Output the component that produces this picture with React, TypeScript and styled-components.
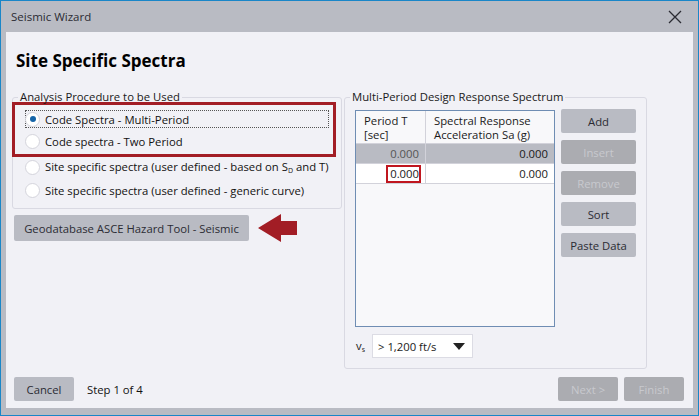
import React from "react";
import styled, { createGlobalStyle } from "styled-components";

const GlobalStyle = createGlobalStyle`
  html, body { margin: 0; padding: 0; background: #ffffff; }
  body { font-family: "Open Sans", "Noto Sans", sans-serif; }
`;

const Window = styled.div`
  width: 699px;
  height: 416px;
  box-sizing: border-box;
  border: 1px solid #1a86c8;
  background: #b9bbc3;
  display: flex;
  flex-direction: column;
  padding: 0 5px 7px 5px;
`;

const TitleBar = styled.div`
  height: 31px;
  flex-shrink: 0;
  display: flex;
  align-items: center;
  justify-content: space-between;
  padding: 0 11px 0 5px;
  font-size: 11.5px;
  color: #2b2b33;
`;

const Content = styled.div`
  flex: 1;
  background: #f1f1f6;
  display: flex;
  flex-direction: column;
  padding: 17px 9px 7px 8px;
`;

const Heading = styled.h1`
  margin: 0 0 0 2px;
  font-size: 17px;
  font-weight: 700;
  color: #000;
  line-height: 24px;
`;

const Columns = styled.div`
  display: flex;
  gap: 2px;
  margin-top: 18px;
  flex: 1;
  align-items: flex-start;
`;

const LeftCol = styled.div`
  display: flex;
  flex-direction: column;
`;

const GroupBox = styled.fieldset<{ $w: number; $h: number }>`
  margin: 0;
  width: ${(p) => p.$w}px;
  height: ${(p) => p.$h}px;
  box-sizing: border-box;
  border: 1px solid #d9d9e2;
  border-radius: 3px;
  padding: 0;
  min-width: 0;
`;

const LeftBox = styled(GroupBox)`
  margin-left: -2px;
`;

const Legend = styled.legend`
  font-size: 11.3px;
  color: #1a1a1a;
  padding: 0 2px;
  margin-left: 5px;
  line-height: 12px;
`;

const Highlight = styled.div`
  width: 324px;
  box-sizing: border-box;
  border: 3px solid #a21d25;
  margin: -1px 0 0 -1px;
  padding: 5px 0 4px 0;
  display: flex;
  flex-direction: column;
  gap: 4px;
`;

const RadioRow = styled.div<{ $focus?: boolean }>`
  display: flex;
  align-items: center;
  gap: 5px;
  height: 18px;
  box-sizing: border-box;
  width: 304px;
  margin-left: 10px;
  font-size: 11.3px;
  color: #111;
  border: 1px dotted ${(p) => (p.$focus ? "#555" : "transparent")};
  white-space: nowrap;
`;

const PlainRows = styled.div`
  display: flex;
  flex-direction: column;
  gap: 5px;
  padding: 1px 0 0 2px;
`;

const Radio = styled.span<{ $on?: boolean }>`
  width: 13px;
  height: 13px;
  margin-left: -1px;
  border-radius: 50%;
  background: #ffffff;
  border: 1px solid #d4d4dc;
  display: flex;
  align-items: center;
  justify-content: center;
  flex-shrink: 0;
  &::after {
    content: "";
    display: ${(p) => (p.$on ? "block" : "none")};
    width: 6px;
    height: 6px;
    border-radius: 50%;
    background: #1464a8;
  }
`;

const ToolRow = styled.div`
  display: flex;
  align-items: center;
  gap: 9px;
  margin-top: 4px;
`;

const Button = styled.button<{ $w: number; $h?: number; $disabled?: boolean }>`
  width: ${(p) => p.$w}px;
  height: ${(p) => p.$h ?? 24}px;
  flex-shrink: 0;
  border: none;
  border-radius: 2px;
  background: ${(p) => (p.$disabled ? "#abacb1" : "#b9bbc3")};
  color: ${(p) => (p.$disabled ? "#c8c9ce" : "#2b2b33")};
  font-family: inherit;
  font-size: 11.3px;
  padding: 0;
  cursor: default;
`;

const RightBox = styled(GroupBox)`
  display: flex;
  flex-direction: column;
`;

const TableArea = styled.div`
  display: flex;
  gap: 6px;
  padding: 7px 0 0 10px;
  align-items: flex-start;
`;

const Table = styled.div`
  width: 200px;
  height: 217px;
  box-sizing: border-box;
  border: 1px solid #6f8db3;
  background: #f8f8fa;
  display: flex;
  flex-direction: column;
`;

const Row = styled.div<{ $bg: string; $h: number }>`
  display: grid;
  grid-template-columns: 70px 1fr;
  height: ${(p) => p.$h}px;
  flex-shrink: 0;
  box-sizing: border-box;
  background: ${(p) => p.$bg};
  border-bottom: 1px solid #d2d2da;
  font-size: 11.3px;
`;

const HeadCell = styled.div<{ $last?: boolean }>`
  padding: 3px 8px 0 8px;
  line-height: 14px;
  color: #1a1a1a;
  white-space: nowrap;
  border-right: ${(p) => (p.$last ? "none" : "1px solid #d2d2da")};
`;

const Cell = styled.div<{ $last?: boolean; $muted?: boolean }>`
  display: flex;
  align-items: center;
  justify-content: flex-end;
  padding-right: 6px;
  color: ${(p) => (p.$muted ? "#555" : "#1a1a1a")};
  border-right: ${(p) => (p.$last ? "none" : "1px solid #d2d2da")};
`;

const Marked = styled.span`
  border: 2px solid #c0161f;
  padding: 0 0 0 2px;
  line-height: 14px;
  margin-right: -2px;
`;

const ButtonCol = styled.div`
  display: flex;
  flex-direction: column;
  gap: 7px;
  margin-top: -1px;
`;

const VsRow = styled.div`
  display: flex;
  align-items: center;
  gap: 7px;
  margin: 7px 0 0 11px;
  font-size: 11.3px;
  color: #222;
`;

const Select = styled.div`
  width: 101px;
  height: 24px;
  box-sizing: border-box;
  background: #fff;
  border: 1px solid #dcdce4;
  display: flex;
  align-items: center;
  justify-content: space-between;
  padding: 0 7px 0 5px;
  font-size: 11.3px;
  color: #1a1a1a;
`;

const Caret = styled.span`
  width: 0;
  height: 0;
  border-left: 6px solid transparent;
  border-right: 6px solid transparent;
  border-top: 7px solid #222;
`;

const Footer = styled.div`
  display: flex;
  align-items: center;
  gap: 6px;
`;

const StepText = styled.span`
  font-size: 11.3px;
  color: #111;
  margin-left: 7px;
  flex: 1;
`;

const Sub = styled.sub`
  font-size: 7px;
  vertical-align: -2px;
`;

function Arrow() {
  return (
    <svg width="40" height="30" viewBox="0 0 40 30">
      <polygon points="0,15 23,1 23,8 39,8 39,22 23,22 23,29" fill="#a21d25" />
    </svg>
  );
}

function CloseIcon() {
  return (
    <svg width="14" height="14" viewBox="0 0 14 14">
      <path d="M1 1 L13 13 M13 1 L1 13" stroke="#2b2b33" strokeWidth="1.3" />
    </svg>
  );
}

export default function App() {
  return (
    <>
      <GlobalStyle />
      <Window>
        <TitleBar>
          <span>Seismic Wizard</span>
          <CloseIcon />
        </TitleBar>
        <Content>
          <Heading>Site Specific Spectra</Heading>
          <Columns>
            <LeftCol>
              <LeftBox $w={330} $h={118}>
                <Legend>Analysis Procedure to be Used</Legend>
                <Highlight>
                  <RadioRow $focus>
                    <Radio $on />
                    Code Spectra - Multi-Period
                  </RadioRow>
                  <RadioRow>
                    <Radio />
                    Code spectra - Two Period
                  </RadioRow>
                </Highlight>
                <PlainRows>
                  <RadioRow>
                    <Radio />
                    <span>
                      Site specific spectra (user defined - based on S<Sub>D</Sub> and T)
                    </span>
                  </RadioRow>
                  <RadioRow>
                    <Radio />
                    Site specific spectra (user defined - generic curve)
                  </RadioRow>
                </PlainRows>
              </LeftBox>
              <ToolRow>
                <Button $w={235} $h={26}>Geodatabase ASCE Hazard Tool - Seismic</Button>
                <Arrow />
              </ToolRow>
            </LeftCol>
            <RightBox $w={303} $h={278}>
              <Legend>Multi-Period Design Response Spectrum</Legend>
              <TableArea>
                <Table>
                  <Row $bg="#f8f8fa" $h={33}>
                    <HeadCell>
                      Period T
                      <br />
                      [sec]
                    </HeadCell>
                    <HeadCell $last>
                      Spectral Response
                      <br />
                      Acceleration Sa (g)
                    </HeadCell>
                  </Row>
                  <Row $bg="#b9bbc3" $h={20}>
                    <Cell $muted>0.000</Cell>
                    <Cell $last>0.000</Cell>
                  </Row>
                  <Row $bg="#ffffff" $h={20}>
                    <Cell>
                      <Marked>0.000</Marked>
                    </Cell>
                    <Cell $last>0.000</Cell>
                  </Row>
                </Table>
                <ButtonCol>
                  <Button $w={75}>Add</Button>
                  <Button $w={75} $disabled>Insert</Button>
                  <Button $w={75} $disabled>Remove</Button>
                  <Button $w={75}>Sort</Button>
                  <Button $w={75}>Paste Data</Button>
                </ButtonCol>
              </TableArea>
              <VsRow>
                <span>
                  v<Sub>s</Sub>
                </span>
                <Select>
                  <span>&gt; 1,200 ft/s</span>
                  <Caret />
                </Select>
              </VsRow>
            </RightBox>
          </Columns>
          <Footer>
            <Button $w={60}>Cancel</Button>
            <StepText>Step 1 of 4</StepText>
            <Button $w={60} $disabled>Next &gt;</Button>
            <Button $w={60} $disabled>Finish</Button>
          </Footer>
        </Content>
      </Window>
    </>
  );
}
